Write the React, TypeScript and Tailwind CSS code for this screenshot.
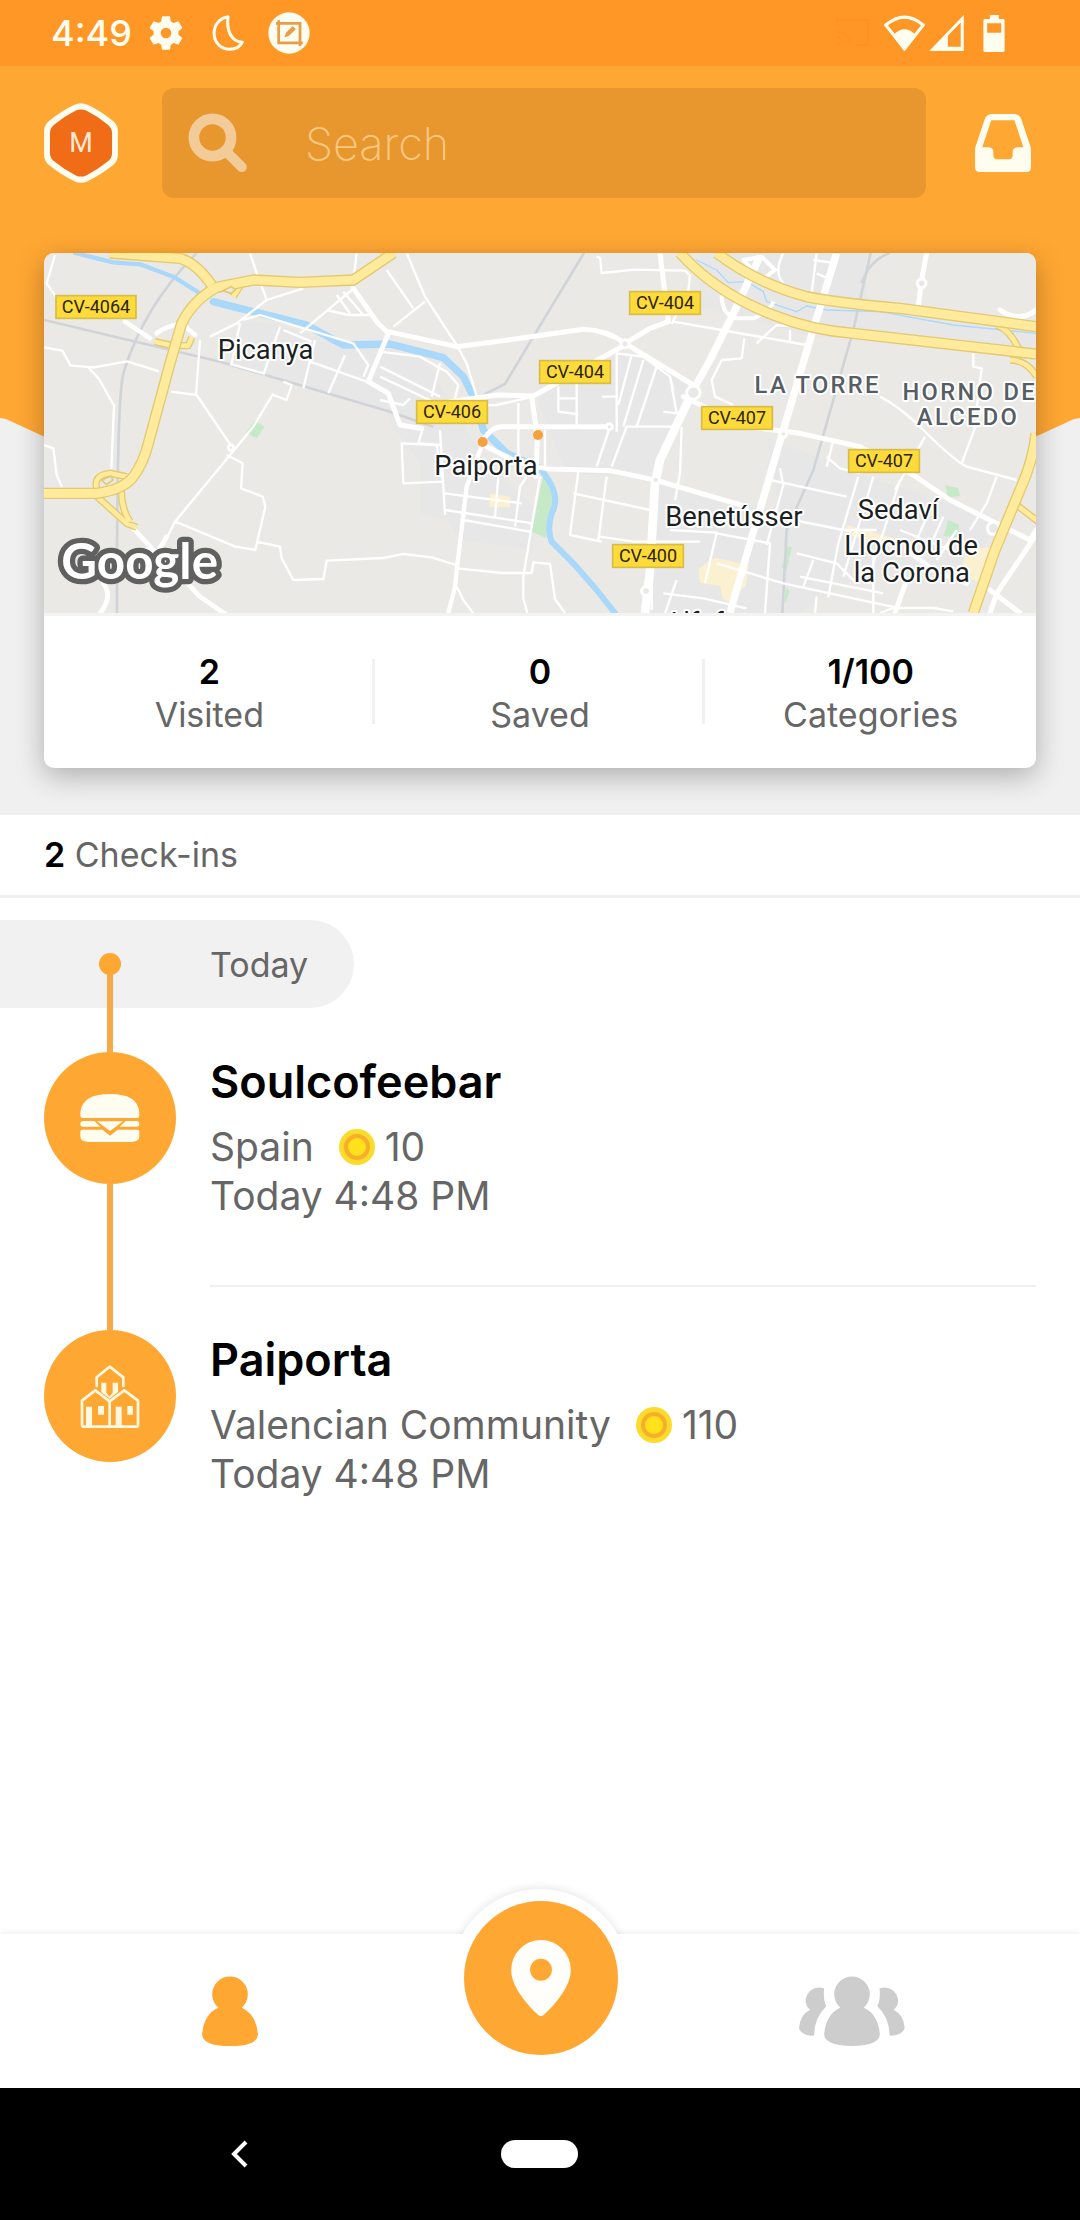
import type { ReactNode } from "react";

const stats = [
  { value: "2", label: "Visited" },
  { value: "0", label: "Saved" },
  { value: "1/100", label: "Categories" },
];

function StatusBar() {
  return (
    <div className="flex h-[66px] items-center justify-between bg-[#ff9727] pl-[51px] pr-[75px] text-[#fffdf0]">
      <div className="flex items-center">
        <span className="w-[95px] text-[36px] font-medium leading-none">4:49</span>
        <svg className="h-[40px] w-[40px]" viewBox="0 0 24 24" fill="currentColor">
          <path d="M19.43 12.98c.04-.32.07-.64.07-.98s-.03-.66-.07-.98l2.11-1.65c.19-.15.24-.42.12-.64l-2-3.46c-.12-.22-.39-.3-.61-.22l-2.49 1c-.52-.4-1.08-.73-1.69-.98l-.38-2.65A.49.49 0 0 0 14 2h-4c-.25 0-.46.18-.49.42l-.38 2.65c-.61.25-1.17.59-1.69.98l-2.49-1c-.23-.09-.49 0-.61.22l-2 3.46c-.13.22-.07.49.12.64l2.11 1.65c-.04.32-.07.65-.07.98s.03.66.07.98l-2.11 1.65c-.19.15-.24.42-.12.64l2 3.46c.12.22.39.3.61.22l2.49-1c.52.4 1.08.73 1.69.98l.38 2.65c.03.24.24.42.49.42h4c.25 0 .46-.18.49-.42l.38-2.65c.61-.25 1.17-.59 1.69-.98l2.49 1c.23.09.49 0 .61-.22l2-3.46c.12-.22.07-.49-.12-.64zM12 15.2a3.2 3.2 0 1 1 0-6.400 3.200 3.200 0 0 1 0 6.400z" />
        </svg>
        <svg className="ml-[26px] h-[36px] w-[32px]" viewBox="0 0 92 106" fill="none" stroke="currentColor" strokeWidth="9" strokeLinejoin="round">
          <path d="M46 5C18 10 5 32 5 54c0 27 20 47 46 47 17 0 31-8 37-21C58 78 41 50 46 5z" />
        </svg>
        <svg className="ml-[24px] h-[42px] w-[42px]" viewBox="0 0 120 122">
          <circle cx="60" cy="61" r="60" fill="currentColor" />
          <g fill="none" stroke="#eb9c48" strokeWidth="8">
            <path d="M22 33h70v66M30 24v66h70" />
            <path d="M47 74l4-14 20-19 9 9-20 19z" fill="#eb9c48" stroke="none" />
          </g>
        </svg>
      </div>
      <div className="flex items-center">
        <svg className="mr-[13px] h-[30px] w-[36px] text-[#ff9322]" viewBox="0 0 36 30" fill="none" stroke="currentColor" strokeWidth="2">
          <path d="M2 8V2h31v25H20M2 26h3M2 20q7 0 7 7M2 14q13 0 13 13" />
        </svg>
        <svg className="h-[36px] w-[41px]" viewBox="0 0 118 104">
          <path d="M5 29Q59-17 113 29L59 98z" fill="none" stroke="currentColor" strokeWidth="9" />
          <path d="M28 56Q59 26 90 56L59 102z" fill="currentColor" />
        </svg>
        <svg className="ml-[4px] h-[36px] w-[35px]" viewBox="0 0 100 104">
          <path fill="currentColor" fillRule="evenodd" d="M0 104L100 0v104zM54 60v32h37V22z" />
        </svg>
        <svg className="ml-[19px] h-[37px] w-[22px]" viewBox="0 0 62 108">
          <path fill="currentColor" fillRule="evenodd" d="M19 0h26v12h13q4 0 4 5v86q0 5-4 5H4q-4 0-4-5V17q0-5 4-5h15zM11 24v28h41V24z" />
        </svg>
      </div>
    </div>
  );
}

function TopBar() {
  return (
    <div className="relative flex items-center justify-between pr-[49px]">
      <button aria-label="Profile" className="relative h-[80px] w-[74px] shrink-0">
        <svg className="h-full w-full" viewBox="0 0 214 232">
          <path fill="#fffdf0" d="M88 5Q107-4 126 5q38 18 74 47 14 12 14 30v68q0 18-14 30-36 29-74 47-19 9-38 0-38-18-74-47Q0 168 0 150V82q0-18 14-30Q50 23 88 5z" />
          <path fill="#f06c17" d="M92 22q15-7 30 0 34 17 63 41 11 9 12 22v62q-1 13-12 22-29 24-63 41-15 7-30 0-34-17-63-41-11-9-12-22V85q1-13 12-22 29-24 63-41z" />
        </svg>
        <span className="absolute inset-0 flex items-center justify-center font-[Roboto] text-[27px] text-[#ffe9d6]">M</span>
      </button>
      <label className="ml-[44px] mr-[49px] flex h-[110px] min-w-0 flex-1 items-center rounded-[12px] bg-[#e7972e] pl-[26px]">
        <svg className="h-[62px] w-[60px] shrink-0 text-[#f3cb98]" viewBox="0 0 174 180" fill="none" stroke="currentColor">
          <circle cx="71" cy="74" r="54" strokeWidth="31" />
          <path d="M113 117l43 43" strokeWidth="29" strokeLinecap="round" />
        </svg>
        <input aria-label="Search" placeholder="Search" className="ml-[57px] h-full min-w-0 flex-1 bg-transparent text-[45px] font-extralight text-white outline-none placeholder:text-[#fbc981]" />
      </label>
      <button aria-label="Inbox" className="shrink-0">
        <svg className="h-[58px] w-[56px]" viewBox="0 0 162 168">
          <path fill="#fffdf0" fillRule="evenodd" d="M48 0h66q15 1 20 15l26 78q2 4 2 9v53q0 13-13 13H13q-13 0-13-13v-53q0-5 2-9l26-78Q33 1 48 0zM47 18L21 96h19q13 1 13 14v10q1 10 10 11h36q9-1 10-11v-10q0-13 13-14h18L114 18z" />
        </svg>
      </button>
    </div>
  );
}

function Highway({ d, width = 26 }: { d: string; width?: number }) {
  return (
    <>
      <path d={d} stroke="#e3c96f" strokeWidth={width + 8} />
      <path d={d} stroke="#ffeb9b" strokeWidth={width} />
    </>
  );
}

function RoadSign({ x, y, w = 212, children }: { x: number; y: number; w?: number; children: string }) {
  return (
    <g>
      <rect x={x} y={y} width={w} height={68} fill="#fddb3a" stroke="#d9bc45" strokeWidth="5" />
      <text x={x + w / 2} y={y + 53} textAnchor="middle" fontSize="54" fill="#2d2510">
        {children}
      </text>
    </g>
  );
}

function Town({ x, y, children }: { x: number; y: number; children: string }) {
  return (
    <text x={x} y={y} fontSize="82" fill="#1c1f22" stroke="#fff" strokeWidth="12" strokeLinejoin="round" paintOrder="stroke">
      {children}
    </text>
  );
}

function District({ x, y, children }: { x: number; y: number; children: string }) {
  return (
    <text x={x} y={y} textAnchor="middle" fontSize="71" fontWeight="500" letterSpacing="7" fill="#565d64" stroke="#fff" strokeWidth="12" strokeLinejoin="round" paintOrder="stroke">
      {children}
    </text>
  );
}

function CityMap() {
  return (
    <svg role="img" aria-label="Map of Paiporta" className="block h-[360px] w-full font-[Roboto]" viewBox="132 69 2976 1080" preserveAspectRatio="xMidYMid slice">
      <rect width="3300" height="1200" fill="#eae9e5" />
      {/* built-up areas */}
      <g fill="#e7e7e8">
        <path d="M730 270L840 285 1040 350 1170 350 1280 400 1380 560 1460 700 1600 830 1600 960 1380 930 1340 870 1260 850 1260 700 1180 590 1160 540 690 410z" />
        <path d="M1600 480L1850 370 2010 410 2080 480 2000 640 1960 760 1940 1149 2400 1149 2560 1050 2940 1000 2980 860 2600 740 2300 620 2440 320 2100 230 2100 69 2600 69 2600 200 3108 300 3108 350 2440 320 2300 620 2340 850 1990 750 1700 730z" />
      </g>
      <path fill="#c6e9c8" d="M1630 735q50 60 20 150l-14 38-41-18zM765 570l28 20-22 34-34-14zM2835 765l40 10 5 22-36 6zM2845 870l32 14-2 38-44-4zM2362 950h14l-16 70-14-8zM2356 1075l14 8-16 40z" />
      <path fill="#fbf0cf" d="M1470 790l60 10v32l-62 0zM2096 1015l50-32 100 22-8 60-50 50-20-8-8-40-60-8zM2540 885l180 50-40 18-140-40zM2900 960l80-10-40 110-60-30z" />
      {/* railways */}
      <g fill="none" stroke="#d0d4d9" strokeWidth="8">
        <path d="M590 69Q430 230 370 430 350 510 351 1149M132 270L660 395 1170 545 1300 590" />
        <path d="M1752 69L1600 320 1515 462 1440 500M2612 69L2560 300 2440 720 2360 900 2347 1149M2670 69q-60 20-85 90" />
      </g>
      {/* river */}
      <g fill="none" stroke="#aad8fa" strokeLinejoin="round" strokeLinecap="round">
        <path strokeWidth="13" d="M225 69L340 97 420 103 520 140 600 190" />
        <path strokeWidth="22" d="M640 215L720 235 830 262 920 285 1030 345 1170 342 1330 383 1390 440 1430 520 1450 600 1520 670 1610 710" />
        <path strokeWidth="18" d="M1610 705Q1690 790 1655 850 1640 900 1655 935L1720 1000 1790 1080 1845 1149" />
        <path strokeWidth="4" d="M2090 90L2150 120 2185 158 2240 155 2290 185 2300 215 2390 245 2420 228 2480 240 2640 245 2860 285 3108 310" />
      </g>
      {/* streets */}
      <g fill="none" stroke="#fff" strokeWidth="7" strokeLinejoin="round">
        <path d="M165 75L140 160 185 225M132 352l55 10 25 45 70 5 100-18 95 30M265 412l32 35 45 80-8 190M132 645l28 10 10 80 16 35M600 330l-12 165-75-10M630 320l80-40 90-70 110-35M590 495l105 155M820 490l-60 100-235 285-35 70M680 675l48 25-5 75 65 25 8 30-30 130-60-10-180-75M770 935l70 15 5 35 35 65 90-3 10-55 170-8 60-12 85 10 70 22M750 69l20 60 30 80M1070 69l-8 65M1160 120l80 115M2970 69" />
        <path d="M720 280l-25 120M840 290l-50 145M945 330l-35 145M1035 375l-50 115M850 455l25 10-15 45-40-15M900 310l155-130M980 240l65 15 65 0M1010 195l40 55M1030 185l60 70M730 270l50-15 280 85 45 65-15 35M790 430l-100-28M930 395l170 60M850 300l85 35" />
        <path d="M1220 69L1275 200 1370 345 1400 400 1430 500M1180 290l95-75M1140 365l120 15 80 45 35 40-15 60M1140 410l180 90M1320 400l-25 100M1140 440l180 85M1140 510l70 15 20-20M1205 640l105 5 20 110-120 5zM1270 590l-15 50 70 5M1320 600l15 255M1335 790l230 30M1335 840l250 38 10 5M1390 870l200 35M1495 740l-10 120M1580 740l-20 30-15 120M1620 740L1570 1040v65l12 44M1370 1015l140 14 85 0 5-32 50 5 15 105 30 42M1370 1070l20 40 30 40" />
        <path d="M1320 530l170-5 110-25M1555 520v190M1635 600v110M1675 470v75l60 8M1730 460v125M1675 505h55M1850 365v240M1805 500h45M1895 375l-40 150M1930 390l-60 200M1970 410l-60 180M1850 370l80 10 80 60 10 40M2010 440l20 110-40-5M2020 590h-140l-45 120M1830 590l-40 120M1735 725l-25 190 95 20M1820 740l-25 190M1720 790l230 50M1800 920l100 15h200M1960 760l-5 380M2045 590l-5 140-15 80M1790 79l10 5 5 45 100-10 150 3 15 15-5 45-50 100M2020 275l400 70M2165 390l60-5 8-60M2165 390l-30 60 10 50 55 25" />
        <path d="M2010 900l140 8-35 150M2150 910l160 30-15 209M1990 1090l120 15 130 30M2150 1000l200 60 350 75M2030 1050l-35 100M2270 340l60-55 70 5M2370 300v40M2350 69q-30 60 0 90M2450 69l-15 120M2440 90l70 10M2450 130l45 20" />
        <path d="M2640 500Q2700 530 2770 600 2860 690 2900 710L3050 750M2775 620l-50 90-40 70M2920 370v40l25 5-15 120M2945 540l-60 160M2990 740l-30 80-50 80M2310 750l230 50M2340 715l10 50-50 180M2480 680l40 35 60 15M2500 630l-20 80M2575 740l-60 200-30 160M2620 740l-90 300M2700 750l-80 250M2380 870l150 30 100 0M2390 970l120 30 60 60M2440 990l-30 80M2400 1040l250 50M2620 960v189M2700 900l150 60M2790 840l-40 90M2830 860l-40 90M2870 900l-60 90M2450 1100l-5 49M2640 1149l40-15 120 0 60 10" />
      </g>
      <g fill="none" stroke="#fff" strokeWidth="15" strokeLinejoin="round" strokeLinecap="round">
        <path d="M375 275L450 325M470 310q40-30 80-25l35 30M390 885l80 85 30-50M440 960q90 60 160 140l80 55M310 1060q30 40-10 90" strokeWidth="14" />
        <path d="M1060 175l70 100 35 35-60 145 60 35 35 95 60 10" />
        <path d="M1165 305L1370 350 1560 325 1750 298Q1820 300 1875 340L2080 465M1875 345L1600 498 1490 495 1350 515M1875 340L1950 295 2005 275 1980 69M1595 500L1612 620 1608 740M1445 635q30-45 60-45h320M1460 650L1540 690Q1620 720 1680 718L1830 722 1965 750 2240 830" />
        <path d="M1448 640L1400 770 1370 1020 1365 1070 1345 1149" strokeWidth="13" />
        <path d="M2050 500L2240 590 2400 610 2580 650 2740 735 2850 810 2950 860 3090 930 3108 900" />
        <path d="M3108 915L2990 1090 2970 1149M2970 1080l90 69M2720 960L2800 1020 2900 1060M2720 1050L2685 1149" />
        <path d="M2780 69l-15 80-10 80M3000 240q60 40 108 0" />
      </g>
      <g fill="none" stroke="#fff" strokeLinejoin="round">
        <path strokeWidth="22" d="M2280 79L2200 250 2130 390 2080 480M2510 69L2430 330 2350 600 2250 940 2190 1149" />
        <path strokeWidth="26" d="M2080 480L1980 690 1965 760 1950 1020 1935 1149" />
        <path strokeWidth="12" d="M2165 195q0 60 45 70h50q50-20 60-50M2230 90l55 60 40-30-40-40z" />
      </g>
      <g fill="#e8e8e8" stroke="#fff" strokeWidth="9">
        <circle cx="2080" cy="488" r="20" />
        <circle cx="1875" cy="341" r="12" />
        <circle cx="1967" cy="750" r="11" />
        <circle cx="1828" cy="590" r="9" />
        <circle cx="1938" cy="1083" r="13" />
        <circle cx="2765" cy="160" r="13" />
        <circle cx="693" cy="653" r="8" />
        <circle cx="2350" cy="612" r="10" />
        <circle cx="2980" cy="895" r="18" />
      </g>
      {/* highways */}
      <g fill="none" strokeLinejoin="round">
        <Highway width={14} d="M275 785L380 880 410 892M365 770q-5 60 25 105M290 775q-10-40 40-45l50 10M465 335l55 12 45 0 10-25M700 200l25-40M2990 285q40 15 65 70M3050 825l65 50M3030 390q50 0 80 50" />
        <Highway d="M330 69L540 85Q590 100 635 165M132 790H290Q370 780 400 740 430 700 445 640L510 400 545 280Q580 210 650 172L760 150 900 157 1060 150 1180 69" />
        <Highway d="M2040 69Q2150 190 2320 255 2430 300 2560 310L3108 372M2150 69Q2270 160 2420 200 2520 220 2700 235L3108 290M3108 610Q3100 690 3060 780L2985 960 2920 1149" />
        <path d="M668 182l25-12 14 8-14 12zM305 750l28-12 6 12-20 14z" fill="#eae9e5" stroke="#e3c96f" strokeWidth="5" />
      </g>
      <RoadSign x={168} y={197} w={240}>CV-4064</RoadSign>
      <RoadSign x={1889} y={185}>CV-404</RoadSign>
      <RoadSign x={1619} y={392}>CV-404</RoadSign>
      <RoadSign x={1250} y={512}>CV-406</RoadSign>
      <RoadSign x={2105} y={530}>CV-407</RoadSign>
      <RoadSign x={2546} y={659}>CV-407</RoadSign>
      <RoadSign x={1838} y={944}>CV-400</RoadSign>
      <Town x={653} y={386}>Picanya</Town>
      <Town x={1303} y={735}>Paiporta</Town>
      <Town x={1996} y={887}>Benetússer</Town>
      <Town x={2573} y={866}>Sedaví</Town>
      <Town x={2533} y={974}>Llocnou de</Town>
      <Town x={2561} y={1057}>la Corona</Town>
      <Town x={1996} y={1207}>Alfafar</Town>
      <District x={2453} y={490}>LA TORRE</District>
      <District x={2909} y={511}>HORNO DE</District>
      <District x={2904} y={584}>ALCEDO</District>
      <circle cx="1448" cy="636" r="15" fill="#f7a03c" />
      <circle cx="1614" cy="615" r="15" fill="#f7a03c" />
      <text x="184" y="1048" fontFamily="Lato" fontSize="148" fontWeight="700" fill="#fff" stroke="#606060" strokeWidth="32" strokeLinejoin="round" paintOrder="stroke">
        Google
      </text>
    </svg>
  );
}

function BurgerIcon() {
  return (
    <svg className="h-[48px] w-[60px]" viewBox="62 42 178 144" fill="#fffdf0">
      <path d="M62 98q4-56 89-56t88 56v10q-1 6-8 6H70q-7 0-8-6zM70 123h34l18 17H70q-8 0-8-8t8-9zM198 123h33q8 1 8 9t-8 8h-51zM112 124h78l-39 29zM68 149h60l23 18 23-18h59q6 0 6 6v14q0 17-26 17H88q-26 0-26-17v-14q0-6 6-6z" />
    </svg>
  );
}

function HousesIcon() {
  return (
    <svg className="h-[63px] w-[60px]" viewBox="66 853 180 189" fill="none" stroke="#fff9e4" strokeWidth="8" strokeLinejoin="round" strokeLinecap="round">
      <path d="M116 916V890l39-32 41 32v26M72 960l40-31 43 33v76H78q-6 0-6-6zM155 962l44-33 41 31v72q0 6-6 6h-79z" />
      <path fill="#fff9e4" stroke="none" d="M130 906h15v30l10 12 9-12v-30h16v28l-25 20-25-20zM84 978h18v58H84zM120 976h18v26h-18zM173 978h18v58h-18zM208 976h17v26h-17z" />
    </svg>
  );
}

function Coin() {
  return (
    <svg className="h-[36px] w-[36px]" viewBox="0 0 36 36">
      <circle cx="18" cy="18" r="18" fill="#fbdc2b" />
      <circle cx="18" cy="18" r="11" fill="#ffe11c" stroke="#f9ae2b" strokeWidth="4" />
    </svg>
  );
}

function CheckIn({ icon, name, place, coins, last = false }: { icon: ReactNode; name: string; place: string; coins: number; last?: boolean }) {
  return (
    <li className="flex gap-[34px] px-[44px]">
      <div className="flex flex-col items-center">
        <div className="flex h-[132px] w-[132px] items-center justify-center rounded-full bg-[#ffa733]">{icon}</div>
        {!last && <div className="w-[6px] flex-1 bg-[#f4ab45]" />}
      </div>
      <div className={last ? "flex-1" : "mb-[43px] flex-1 border-b-2 border-[#f0f0f0] pb-[65px]"}>
        <h3 className="text-[45px] font-semibold leading-[60px] text-black">{name}</h3>
        <div className="mt-[10px] flex items-center text-[39px] leading-[49px] text-[#666]">
          <span className="mr-[25px]">{place}</span>
          <Coin />
          <span className="ml-[10px]">{coins}</span>
        </div>
        <p className="text-[39px] leading-[49px] text-[#666]">Today 4:48 PM</p>
      </div>
    </li>
  );
}

export default function App() {
  return (
    <div className="flex min-h-screen flex-col bg-white font-['Inter',sans-serif]">
      <StatusBar />
      <header className="relative bg-[#f0f0f0] pb-[47px] pl-[44px] pt-[22px]">
        <div className="absolute inset-x-0 top-0 h-[600px] bg-[#ffa733] [clip-path:polygon(0_0,100%_0,100%_352px,calc(100%-6px)_353px,50%_600px,6px_353px,0_352px)]" />
        <TopBar />
        <section className="relative mr-[44px] mt-[55px] overflow-hidden rounded-[10px] bg-white shadow-[0_8px_28px_rgba(0,0,0,0.28)]">
          <CityMap />
          <dl className="grid grid-cols-3 border-t-[3px] border-[#f3f3f3] pb-[32px] pt-[34px]">
            {stats.map((s, i) => (
              <div key={s.label} className={i < 2 ? "relative flex flex-col-reverse items-center text-[34px] leading-[43px] after:absolute after:bottom-[12px] after:right-0 after:top-[9px] after:w-[3px] after:bg-[#f1f1f1]" : "flex flex-col-reverse items-center text-[34px] leading-[43px]"}>
                <dt className="text-[#666]">{s.label}</dt>
                <dd className="font-semibold text-black">{s.value}</dd>
              </div>
            ))}
          </dl>
        </section>
      </header>
      <main className="flex-1">
        <p className="border-b-[3px] border-[#f0f0f0] px-[44px] text-[34px] leading-[80px] text-[#666]">
          <span className="font-semibold text-black">2</span> Check-ins
        </p>
        <h2 className="relative mb-[44px] mt-[22px] flex h-[88px] w-fit items-center rounded-r-full bg-[#f1f1f1] pl-[210px] pr-[46px] text-[34px] text-[#666]">
          Today
          <span className="absolute -bottom-[44px] left-[107px] top-[44px] w-[6px] bg-[#f4ab45]" />
          <span className="absolute left-[99px] top-[33px] h-[22px] w-[22px] rounded-full bg-[#ffa733]" />
        </h2>
        <ul>
          <CheckIn icon={<BurgerIcon />} name="Soulcofeebar" place="Spain" coins={10} />
          <CheckIn icon={<HousesIcon />} name="Paiporta" place="Valencian Community" coins={110} last />
        </ul>
      </main>
      <nav className="relative flex h-[154px] items-center justify-between bg-white pl-[176px] pr-[174px] shadow-[0_-2px_6px_rgba(0,0,0,0.06)]">
        <div className="absolute inset-x-0 bottom-full flex h-[57px] justify-center overflow-hidden pt-[12px]">
          <div className="h-[178px] w-[178px] shrink-0 rounded-full bg-white shadow-[0_-2px_8px_rgba(0,0,0,0.09)]" />
        </div>
        <button aria-label="Profile" className="flex w-[108px] justify-center">
          <svg className="h-[70px] w-[56px]" viewBox="0 0 166 208" fill="#ffa733">
            <path d="M48 94A53 53 0 1 1 118 94Q160 112 166 172 166 208 83 208T0 172Q6 112 48 94z" />
          </svg>
        </button>
        <button aria-label="Check in" className="relative -mt-[66px] flex h-[154px] w-[154px] items-center justify-center rounded-full bg-[#ffa733]">
          <svg className="h-[76px] w-[60px]" viewBox="0 0 180 230" fill="#fffefa">
            <path fillRule="evenodd" d="M90 0a90 90 0 0 1 90 92c0 48-48 104-81 134q-9 8-18 0C48 196 0 140 0 92A90 90 0 0 1 90 0zM90 57a33 33 0 1 0 0 66 33 33 0 0 0 0-66z" />
          </svg>
        </button>
        <button aria-label="Friends" className="flex w-[108px] justify-center">
          <svg className="h-[70px] w-[106px]" viewBox="117 110 316 208" fill="#cdcdcd">
            <path d="M240 204A53 53 0 1 1 310 204Q352 222 358 282 358 318 275 318T192 282Q198 222 240 204z" />
            <path d="M192 146Q158 138 142 164 128 192 150 210 120 225 117 265 122 286 162 288 162 235 198 200 188 180 192 146zM357 146Q391 138 407 164 421 192 399 210 429 225 432 265 427 286 387 288 387 235 351 200 361 180 357 146z" />
          </svg>
        </button>
      </nav>
      <footer className="grid h-[132px] grid-cols-3 items-center bg-black px-[89px]">
        <button aria-label="Back" className="flex justify-center">
          <svg className="h-[28px] w-[17px]" viewBox="0 0 17 28" fill="none" stroke="#fff" strokeWidth="4">
            <path d="M15 2L3 14l12 12" />
          </svg>
        </button>
        <button aria-label="Home" className="mx-auto h-[28px] w-[77px] rounded-full bg-white" />
      </footer>
    </div>
  );
}
